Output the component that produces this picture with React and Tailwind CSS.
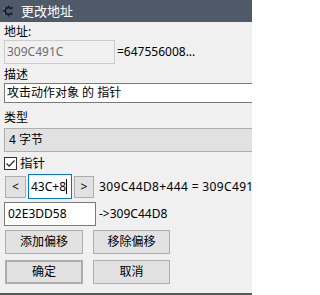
import React from "react";

const font = { fontFamily: '"Noto Sans", "Noto Sans CJK SC", sans-serif' };

function CeIcon() {
  // small dark cog, like the title bar icon
  return (
    <svg width="14" height="14" viewBox="0 0 14 14">
      <path
        d="M7 1.5 L8.2 1.5 L8.5 3 L9.8 3.5 L11 2.6 L11.9 3.5 L11.1 4.8 L11.6 6 L13 6.3 L13 7.6 L11.6 8 L11.1 9.2 L11.9 10.4 L11 11.3 L9.8 10.5 L8.5 11 L8.2 12.5 L6.9 12.5 L6.6 11 L5.3 10.5 L4.1 11.3 L3.2 10.4 L4 9.2 L3.5 8 L2 7.6 L2 6.3 L3.5 6 L4 4.8 L3.2 3.5 L4.1 2.6 L5.3 3.5 L6.6 3 Z"
        fill="#142033"
      />
      <circle cx="7.5" cy="7" r="2.4" fill="#4f5a68" />
      <rect x="8" y="5.5" width="6" height="3" fill="#4f5a68" />
      <circle cx="3.2" cy="4" r="0.7" fill="#8fb4d8" />
      <circle cx="3.2" cy="10" r="0.7" fill="#8fb4d8" />
    </svg>
  );
}

function Btn({ children, className = "" }) {
  return (
    <div
      className={`shrink-0 flex items-center justify-center bg-[#e1e1e1] border border-[#adadad] text-[12px] text-black ${className}`}
    >
      {children}
    </div>
  );
}

export default function App() {
  return (
    <div
      className="w-[252px] h-[295px] overflow-hidden bg-[#f0f0f0] flex flex-col text-[12px] text-black"
      style={font}
    >
      {/* title bar */}
      <div className="h-[22px] shrink-0 bg-[#4f5a68] flex items-center pl-[1px]">
        <CeIcon />
        <span className="ml-[6px] text-white text-[13px] leading-[22px]">更改地址</span>
      </div>

      <div className="flex-1 flex flex-col pl-[4px] pt-[2px] border-b-2 border-[#5a5a5a]">
        <div className="h-[16px] leading-[16px]">地址:</div>

        <div className="h-[24px] flex items-center whitespace-nowrap">
          <div className="w-[111px] h-[24px] shrink-0 border border-[#cccccc] text-[#6d6d6d] pl-[2px] flex items-center">
            309C491C
          </div>
          <span className="ml-[2px] shrink-0">=647556008...</span>
        </div>

        <div className="mt-[3px] h-[16px] leading-[16px]">描述</div>
        <div className="h-[20px] w-[270px] shrink-0 border border-[#7a7a7a] bg-white pl-[2px] flex items-center whitespace-nowrap">
          攻击动作对象 的 指针
        </div>

        <div className="mt-[7px] h-[16px] leading-[16px]">类型</div>
        <div className="mt-[2px] h-[24px] w-[270px] shrink-0 bg-[#e1e1e1] border border-[#adadad] pl-[4px] flex items-center">
          4 字节
        </div>

        <div className="mt-[5px] h-[13px] flex items-center">
          <div className="w-[13px] h-[13px] shrink-0 border border-[#333333] bg-white flex items-center justify-center">
            <svg width="11" height="11" viewBox="0 0 11 11">
              <path d="M1.5 5.5 L4.2 8.2 L9.5 2.5" fill="none" stroke="#222" strokeWidth="1.2" />
            </svg>
          </div>
          <span className="ml-[3px] leading-[13px] text-[12.5px]">指针</span>
        </div>

        <div className="mt-[4px] h-[25px] flex items-center whitespace-nowrap">
          <Btn className="ml-[1px] w-[21px] h-[22px]">&lt;</Btn>
          <div className="ml-[2px] w-[44px] h-[25px] shrink-0 bg-white border border-[#0078d7] pl-[2px] flex items-center">
            <span>43C+8</span>
            <span className="w-px h-[15px] bg-black" />
          </div>
          <Btn className="ml-[2px] w-[20px] h-[22px]">&gt;</Btn>
          <span className="ml-[5px] shrink-0 tracking-[0.35px]">309C44D8+444 = 309C491C</span>
        </div>

        <div className="mt-[3px] h-[24px] flex items-center whitespace-nowrap">
          <div className="w-[92px] h-[24px] shrink-0 bg-white border border-[#7a7a7a] pl-[3px] flex items-center">
            02E3DD58
          </div>
          <span className="ml-[3px] shrink-0">-&gt;309C44D8</span>
        </div>

        <div className="mt-[4px] h-[24px] flex pl-[1px]">
          <Btn className="w-[78px] h-[24px]">添加偏移</Btn>
          <Btn className="ml-[10px] w-[77px] h-[24px]">移除偏移</Btn>
        </div>

        <div className="mt-[6px] h-[24px] flex pl-[1px]">
          <Btn className="w-[78px] h-[24px] border-2 border-[#0078d7]">确定</Btn>
          <Btn className="ml-[10px] w-[77px] h-[24px]">取消</Btn>
        </div>
      </div>
    </div>
  );
}
